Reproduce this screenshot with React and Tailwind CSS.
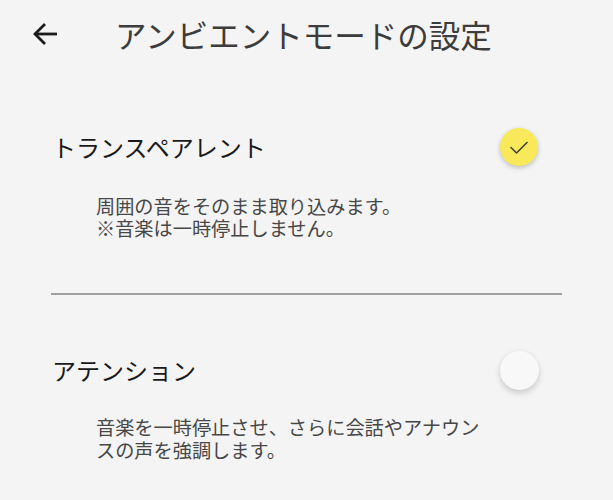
import React from "react";

const font = {
  fontFamily: '"Noto Sans CJK JP", "Noto Sans", sans-serif',
};

function Toggle({ on }) {
  if (on) {
    return (
      <div className="w-[38px] h-[38px] rounded-full bg-[#f8e85a] shadow-[0_2px_5px_rgba(0,0,0,0.22)] flex items-center justify-center">
        <svg width="18" height="13" viewBox="0 0 18 13" fill="none">
          <path d="M1 6.5 L6.5 12 L17 1.5" stroke="#424236" strokeWidth="1.6" strokeLinecap="round" strokeLinejoin="round" />
        </svg>
      </div>
    );
  }
  return (
    <div className="w-[39px] h-[39px] rounded-full bg-[#f8f8f8] shadow-[0_3px_6px_rgba(0,0,0,0.18)]" />
  );
}

export default function App() {
  return (
    <div className="w-[613px] h-[500px] bg-[#f4f4f4] overflow-hidden" style={font}>
      {/* header */}
      <div className="h-[68px] flex items-center">
        <svg className="ml-[32px]" width="26" height="24" viewBox="0 0 26 24" fill="none">
          <path d="M25 12 H3" stroke="#1c1c1c" strokeWidth="2.8" />
          <path d="M13 2 L3 12 L13 22" stroke="#1c1c1c" strokeWidth="2.8" strokeLinejoin="miter" />
        </svg>
        <div className="ml-[57px] text-[31.5px] leading-[40px] text-[#3c3c3c] whitespace-nowrap">
          アンビエントモードの設定
        </div>
      </div>

      {/* row 1 */}
      <div className="mt-[51px] h-[56px] flex items-center justify-between pl-[52px] pr-[75px]">
        <div className="text-[24px] leading-[30px] text-[#1a1a1a]">トランスペアレント</div>
        <Toggle on />
      </div>
      <div className="mt-[20px] pl-[96px] text-[19.2px] leading-[22px] text-[#474747] whitespace-nowrap">
        <div>周囲の音をそのまま取り込みます。</div>
        <div>※音楽は一時停止しません。</div>
      </div>

      {/* divider */}
      <div className="mt-[54px] mx-[51px] h-[2px] bg-[#a0a0a0]" />

      {/* row 2 */}
      <div className="mt-[47px] h-[56px] flex items-center justify-between pl-[52px] pr-[74px]">
        <div className="text-[24px] leading-[30px] text-[#1a1a1a]">アテンション</div>
        <Toggle on={false} />
      </div>
      <div className="mt-[18px] pl-[96px] text-[19.2px] leading-[23px] text-[#474747] whitespace-nowrap">
        <div>音楽を一時停止させ、さらに会話やアナウン</div>
        <div>スの声を強調します。</div>
      </div>
    </div>
  );
}
